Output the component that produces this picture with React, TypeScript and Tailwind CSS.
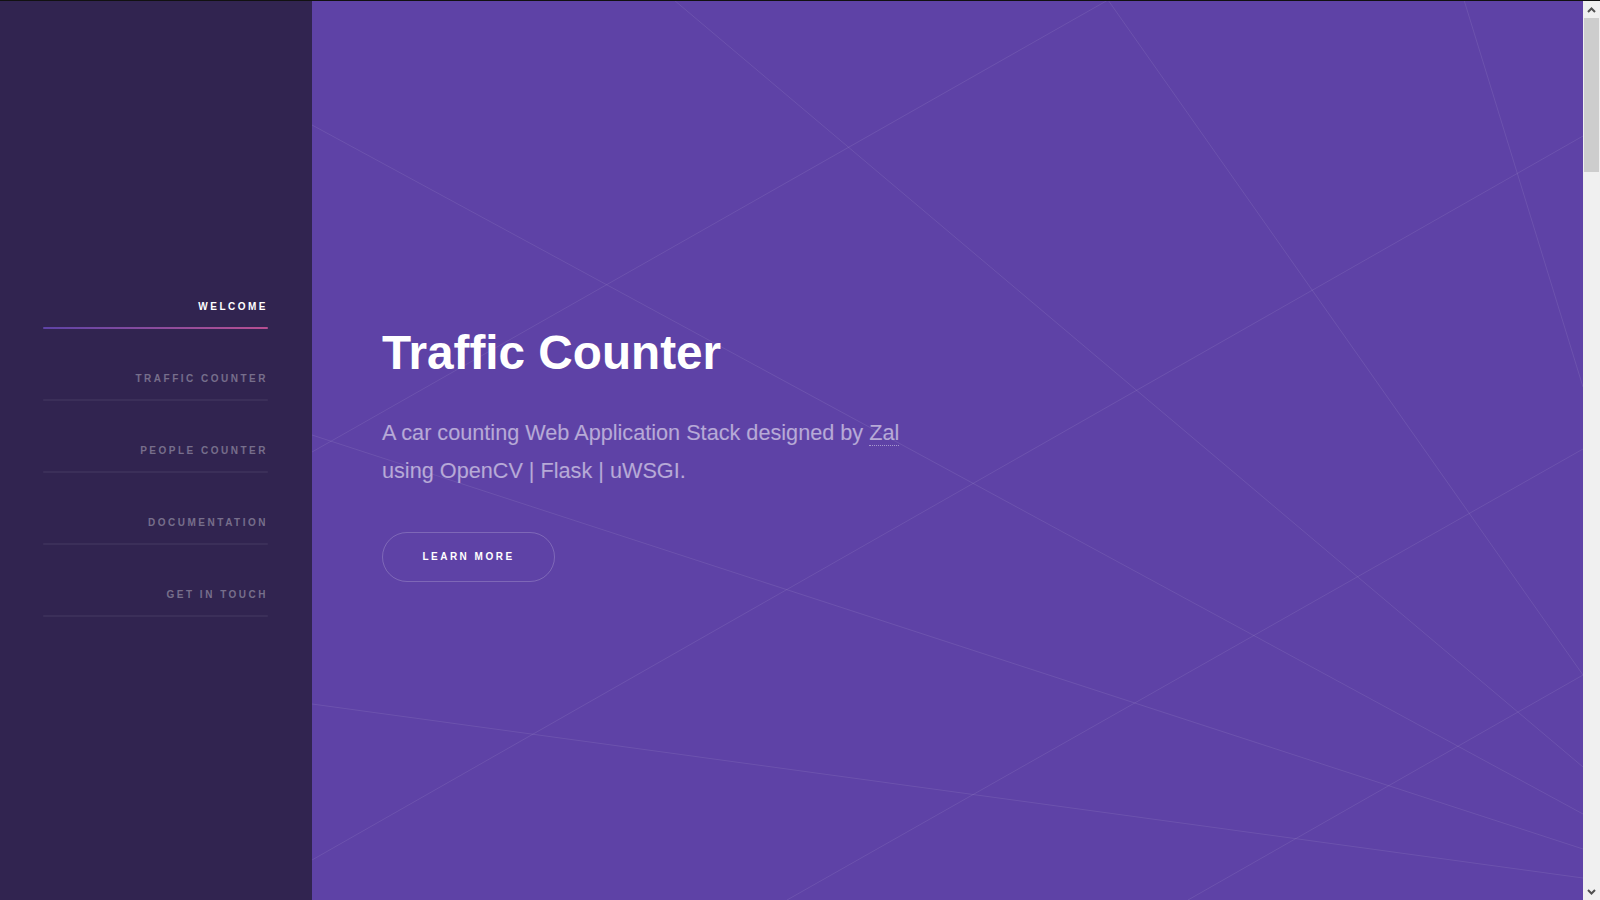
import { ReactNode } from 'react';

const navItems = ['Welcome', 'Traffic Counter', 'People Counter', 'Documentation', 'Get in Touch'];

// background line pattern, in page coordinates (main area spans x 312..1583)
const lines = [
  [674, 0, 1583, 767],
  [1108, 0, 1583, 675],
  [1108, 0, 312, 452],
  [312, 125, 1583, 814],
  [1464, 0, 1583, 387],
  [1583, 136, 312, 860],
  [1583, 449, 787, 900],
  [312, 704, 1583, 878],
  [312, 435, 1583, 849],
  [1583, 675, 1188, 900],
];

function Sidebar() {
  return (
    <aside className="w-[312px] shrink-0 bg-[#312450] pl-[43px] pr-[44px] pt-[298px]">
      <nav>
        <ul className="flex flex-col gap-[42px]">
          {navItems.map((item, i) => (
            <li key={item}>
              <a href="#" className="block">
                <div
                  className={`text-right text-[10px] leading-[16px] font-bold uppercase tracking-[2.5px] ${
                    i === 0 ? 'text-white' : 'text-white/35'
                  }`}
                >
                  {item}
                </div>
                <div
                  className={`mt-[12px] h-[2px] rounded-full ${
                    i === 0 ? 'bg-gradient-to-r from-[#5e42a6] to-[#b74e91]' : 'bg-white/5'
                  }`}
                />
              </a>
            </li>
          ))}
        </ul>
      </nav>
    </aside>
  );
}

function Intro() {
  return (
    <section className="relative flex-1 overflow-hidden bg-[#5e42a6]">
      <svg
        className="absolute inset-0 h-full w-full"
        viewBox="312 1 1271 899"
        preserveAspectRatio="none"
      >
        {lines.map(([x1, y1, x2, y2], i) => (
          <line key={i} x1={x1} y1={y1} x2={x2} y2={y2} stroke="rgba(255,255,255,0.085)" strokeWidth="1" />
        ))}
      </svg>
      <div className="relative pl-[70px] pt-[322px]">
        <h1 className="text-[47.7px] leading-[60px] font-bold text-white">Traffic Counter</h1>
        <p className="mt-[31px] text-[21.67px] leading-[37.9px] text-white/55">
          A car counting Web Application Stack designed by{' '}
          <a href="#" className="border-b border-dotted border-white/45">
            Zal
          </a>
          <br />
          using OpenCV | Flask | uWSGI.
        </p>
        <a
          href="#"
          className="mt-[42px] flex h-[50px] w-[173px] items-center justify-center rounded-full border border-white/20 text-[10px] font-bold uppercase tracking-[2.5px] text-white"
        >
          Learn More
        </a>
      </div>
    </section>
  );
}

function Arrow({ up }: { up?: boolean }): ReactNode {
  return (
    <div className="flex h-[17px] items-center justify-center">
      <svg width="9" height="6" viewBox="0 0 9 6">
        <polyline
          points={up ? '1,5 4.5,1.5 8,5' : '1,1 4.5,4.5 8,1'}
          fill="none"
          stroke="#505050"
          strokeWidth="2"
        />
      </svg>
    </div>
  );
}

function Scrollbar() {
  return (
    <div className="flex w-[17px] shrink-0 flex-col bg-[#f0f0f0]">
      <Arrow up />
      <div className="flex-1">
        <div className="ml-[1px] h-[154px] w-[15px] bg-[#cdcdcd]" />
      </div>
      <Arrow />
    </div>
  );
}

export default function App() {
  return (
    <div className="flex h-[900px] w-full flex-col overflow-hidden font-['Liberation_Sans',Arial,sans-serif]">
      <div className="h-[1px] bg-[#111]" />
      <div className="flex flex-1">
        <Sidebar />
        <Intro />
        <Scrollbar />
      </div>
    </div>
  );
}
